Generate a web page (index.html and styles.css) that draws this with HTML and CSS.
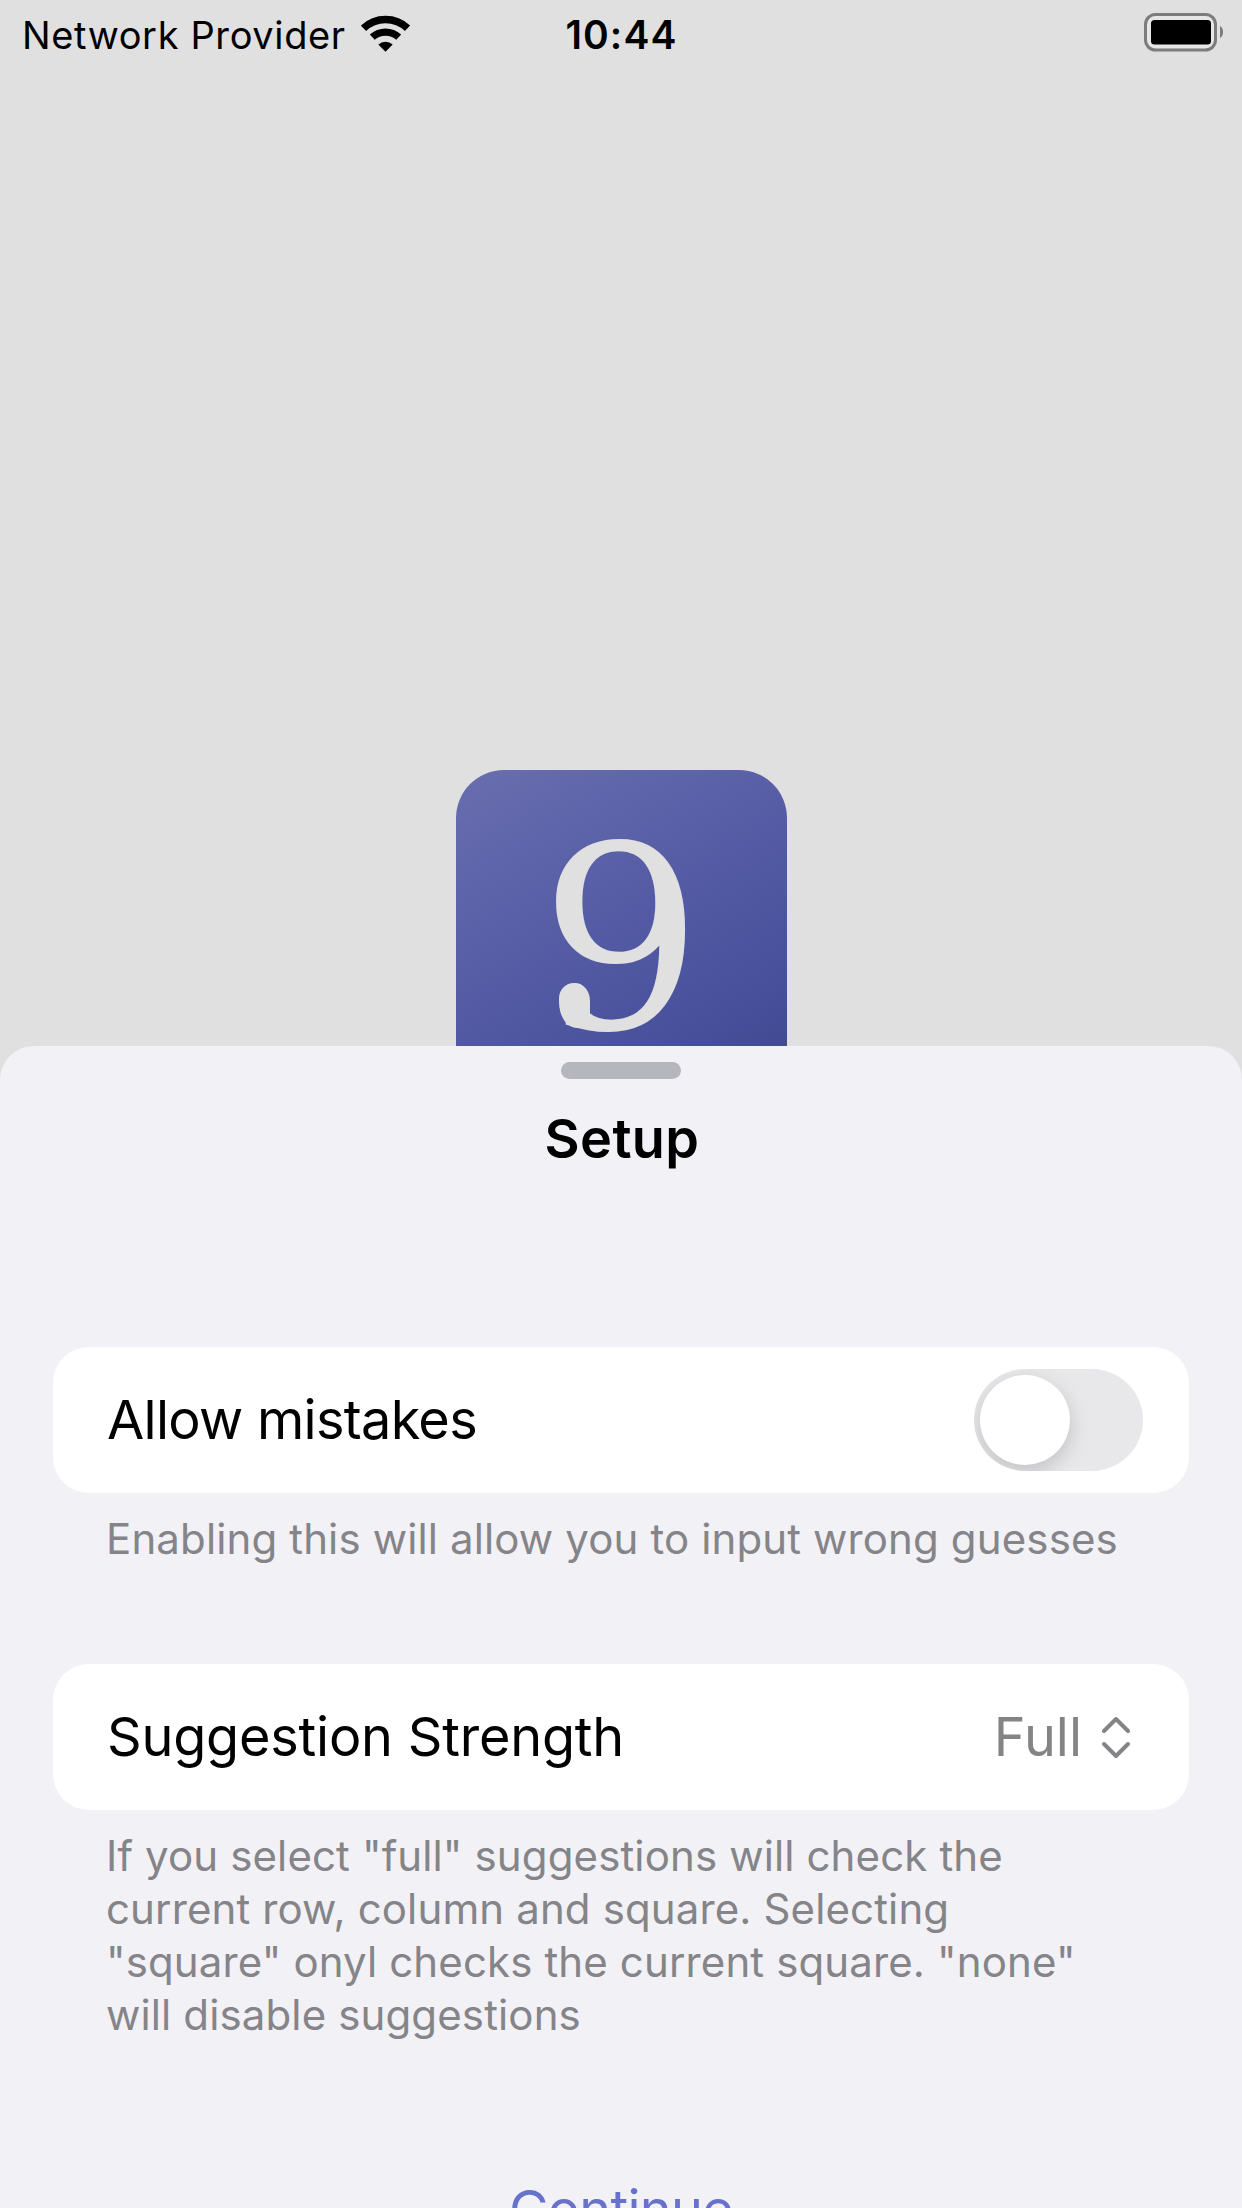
FILE: index.html
```html
<!DOCTYPE html>
<html lang="en">
<head>
<meta charset="utf-8">
<title>Setup</title>
<link rel="stylesheet" href="styles.css">
</head>
<body>
<main class="screen">
  <section class="backdrop">
    <header class="status">
      <div class="carrier">
        <span class="carrier-name">Network Provider</span>
        <svg class="wifi" width="50" height="38" viewBox="0 0 50 38">
          <path d="M2.500 13.300A32 32 0 0 1 46.500 13.300" fill="none" stroke="#000" stroke-width="7.600"/>
          <path d="M11.300 22.200A19.500 19.500 0 0 1 37.700 22.200" fill="none" stroke="#000" stroke-width="7.200"/>
          <path d="M17.300 29.500A11 11 0 0 1 31.700 29.500L24.500 36.700Z"/>
        </svg>
      </div>
      <time class="clock">10:44</time>
      <svg class="battery" width="80" height="40" viewBox="0 0 80 40">
        <rect x="1.500" y="1.500" width="70" height="35.500" rx="10" fill="#e6e6e6" stroke="#7c7c7c" stroke-width="3"/>
        <rect x="7" y="7" width="60" height="24.500" rx="3.500"/>
        <path d="M76 13Q79 14.500 79 19Q79 23.500 76 25Z" fill="#7c7c7c"/>
      </svg>
    </header>
    <div class="logo"><span class="logo-digit">9</span></div>
  </section>
  <section class="sheet">
    <div class="handle"></div>
    <h1 class="title">Setup</h1>
    <div class="card">
      <span class="label">Allow mistakes</span>
      <span class="switch"><span class="thumb"></span></span>
    </div>
    <p class="note note-short">Enabling this will allow you to input wrong guesses</p>
    <div class="card">
      <span class="label label-wide">Suggestion Strength</span>
      <span class="picker">
        <span class="value">Full</span>
        <svg width="30" height="44" viewBox="0 0 30 44" fill="none" stroke="#848487" stroke-width="4" stroke-linecap="round" stroke-linejoin="round">
          <path d="M3 16L15 4L27 16M3 29L15 41L27 29"/>
        </svg>
      </span>
    </div>
    <p class="note">If you select "full" suggestions will check the<br>current row, column and square. Selecting<br>"square" onyl checks the current square. "none"<br>will disable suggestions</p>
    <div class="continue">Continue</div>
  </section>
</main>
</body>
</html>
```
FILE: styles.css
```css
* { box-sizing: border-box; }
body {
  margin: 0;
  background: #e0e0e0;
  color: #000;
  font-family: Inter, "Liberation Sans", sans-serif;
}
.screen {
  width: 1242px;
  height: 2208px;
  overflow: hidden;
  display: flex;
  flex-direction: column;
}
.backdrop {
  height: 1046px;
  flex: none;
  overflow: hidden;
  display: flex;
  flex-direction: column;
  align-items: center;
}
.status {
  width: 100%;
  height: 66px;
  flex: none;
  padding: 0 18px 0 22px;
  display: grid;
  grid-template-columns: 1fr auto 1fr;
  align-items: center;
}
.carrier { display: flex; align-items: center; gap: 15px; }
.carrier-name { padding-top: 2px; font-size: 38px; line-height: 66px; letter-spacing: 0.63px; white-space: nowrap; }
.wifi { margin-top: -1px; }
.clock { padding: 1px 3px 0 0; font-size: 39px; line-height: 66px; font-weight: 600; letter-spacing: 1.1px; }
.battery { justify-self: end; margin-top: -2px; }
.logo {
  position: relative;
  width: 331px;
  height: 331px;
  margin-top: 704px;
  flex: none;
  border-radius: 48px;
  background: linear-gradient(150deg, #696eaf 0%, #575ea6 40%, #474f9b 78%, #3d4588 100%);
  display: flex;
  justify-content: center;
}
.logo-digit {
  margin-top: 4px;
  font-family: "DejaVu Serif", serif;
  font-size: 255px;
  line-height: 331px;
  color: #e0e0e0;
}
/* round terminal on the tail of the digit */
.logo::after {
  content: "";
  position: absolute;
  left: 103px;
  top: 213px;
  width: 31px;
  height: 45px;
  border-radius: 15px 15px 0 18px / 15px 18px 0 26px;
  background: #e0e0e0;
}
.sheet {
  height: 1162px;
  flex: none;
  padding: 16px 53px 0;
  border-radius: 34px 34px 0 0;
  background: #f2f1f6;
  display: flex;
  flex-direction: column;
}
.handle {
  width: 120px;
  height: 17px;
  flex: none;
  align-self: center;
  border-radius: 9px;
  background: #b6b7bd;
}
.title {
  margin: 25px 0 174px;
  padding-left: 2px;
  font-size: 54px;
  line-height: 69px;
  font-weight: 600;
  letter-spacing: 0.4px;
  text-align: center;
}
.card {
  height: 146px;
  flex: none;
  padding: 0 46px 0 54px;
  border-radius: 36px;
  background: #fff;
  display: flex;
  align-items: center;
  justify-content: space-between;
}
.label, .value { font-size: 54px; line-height: 66px; white-space: nowrap; }
.label { letter-spacing: -0.7px; }
.label-wide { letter-spacing: -0.2px; }
.switch {
  width: 169px;
  height: 102px;
  padding: 6px;
  border-radius: 51px;
  background: #e8e8ea;
  overflow: hidden;
}
.thumb {
  display: block;
  width: 90px;
  height: 90px;
  border-radius: 50%;
  background: #fff;
  box-shadow: 0 7px 20px rgba(0, 0, 0, 0.17);
}
.picker { display: flex; align-items: center; gap: 19px; color: #848487; margin-right: 12px; }
.note {
  margin: 19px 0 0 53px;
  font-size: 42px;
  line-height: 53px;
  letter-spacing: 0.13px;
  color: #848489;
  white-space: nowrap;
}
.note-short { margin-bottom: 99px; }
.continue {
  margin-top: 136px;
  font-size: 54px;
  line-height: 66px;
  letter-spacing: -0.7px;
  text-align: center;
  color: #6872cb;
}
```
